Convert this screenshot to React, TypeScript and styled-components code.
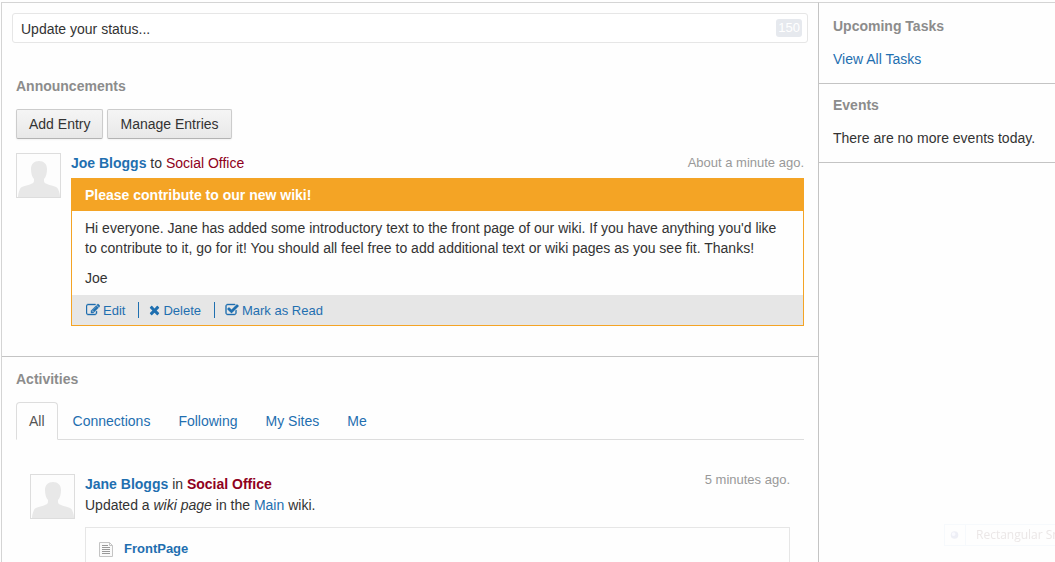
import React from "react";
import styled, { createGlobalStyle } from "styled-components";

const GlobalStyle = createGlobalStyle`
  * { box-sizing: border-box; }
  body {
    margin: 0;
    background: #fefefe;
    color: #333;
    font: 14px/20px "Liberation Sans", Arial, sans-serif;
  }
  p { margin: 0; }
  a { color: #1f6fb0; text-decoration: none; }
`;

const Page = styled.div`
  display: flex;
  min-height: 100vh;
  padding-top: 2px;
  padding-left: 1px;
`;

const Main = styled.main`
  flex: 1;
  min-width: 0;
  border-top: 1px solid #d4d4d4;
  border-left: 1px solid #d4d4d4;
`;

const Sidebar = styled.aside`
  flex: 0 0 237px;
  border-top: 1px solid #d4d4d4;
  border-left: 1px solid #c4c4c4;
`;

const SidePanel = styled.section`
  padding: 13px 14px 14px;
  border-bottom: 1px solid #c4c4c4;
  white-space: nowrap;

  & + & { padding-top: 11px; }
`;

const Heading = styled.h2`
  margin: 0;
  color: #8c8c8c;
  font-size: 14px;
  line-height: 20px;
`;

const SideText = styled.p`
  margin-top: 13px;
`;

const StatusForm = styled.form`
  display: flex;
  align-items: center;
  height: 30px;
  margin: 10px 10px 33px;
  padding: 0 5px 0 8px;
  border: 1px solid #e6e6e6;
  border-radius: 3px;
  background: #fff;
`;

const StatusInput = styled.input`
  flex: 1;
  min-width: 0;
  padding: 2px 0 0;
  border: 0;
  outline: 0;
  background: transparent;
  color: #333;
  font: inherit;

  &::placeholder { color: #333; opacity: 1; }
`;

const Counter = styled.span`
  padding: 0 2px;
  border-radius: 3px;
  background: #e6e9ee;
  color: #fff;
  font-size: 13px;
  line-height: 18px;
`;

const Announcements = styled.section`
  padding: 0 14px 30px;
  border-bottom: 1px solid #c4c4c4;
`;

const ButtonRow = styled.div`
  display: flex;
  gap: 4px;
  margin: 13px 0 14px;
`;

const Button = styled.button`
  height: 30px;
  padding: 0 12px;
  border: 1px solid #ccc;
  border-bottom-color: #b3b3b3;
  border-radius: 2px;
  background: linear-gradient(#f5f5f5, #e8e8e8);
  box-shadow: 0 1px 2px rgba(0, 0, 0, 0.05);
  color: #333;
  font: inherit;
`;

const Post = styled.article`
  display: flex;
  gap: 10px;
`;

const PostBody = styled.div`
  flex: 1;
  min-width: 0;
`;

const PostHeader = styled.header<{ $bottom: number }>`
  display: flex;
  justify-content: space-between;
  padding-bottom: ${(p) => p.$bottom}px;
`;

const SiteLink = styled.a`
  color: #8f0020;
`;

const Time = styled.time<{ $lineHeight: number }>`
  color: #999;
  font-size: 13px;
  line-height: ${(p) => p.$lineHeight}px;
`;

const AvatarFrame = styled.svg`
  flex: none;
  width: 45px;
  height: 45px;
  border: 1px solid #ddd;
  background: #fdfdfd;
`;

const Notice = styled.div`
  border: 1px solid #f4a425;
`;

const NoticeTitle = styled.h3`
  margin: 0;
  padding: 6px 13px;
  background: #f4a425;
  color: #fff;
  font-size: 14px;
  line-height: 20px;
`;

const NoticeText = styled.div`
  display: grid;
  gap: 10px;
  padding: 7px 13px;
`;

const NoticeActions = styled.div`
  display: flex;
  padding: 7px 14px;
  background: #e6e6e6;
`;

const Action = styled.a`
  display: flex;
  align-items: center;
  gap: 3px;
  font-size: 13px;
  line-height: 16px;

  & + & {
    margin-left: 13px;
    padding-left: 10px;
    border-left: 1px solid #1f6fb0;
  }
`;

const ActionLabel = styled.span`
  padding-top: 1px;
  line-height: 15px;
`;

const Glyph = styled.svg`
  width: 14px;
  height: 14px;
  fill: currentColor;
`;

const CrossGlyph = styled(Glyph)`
  width: 11px;
`;

const Activities = styled.section`
  padding: 12px 14px 0;
`;

const Tabs = styled.nav`
  display: flex;
  gap: 2px;
  margin: 13px 0 34px;
  border-bottom: 1px solid #ddd;
`;

const Tab = styled.a<{ $active?: boolean }>`
  margin-bottom: -1px;
  padding: 8px 12px;
  border: 1px solid ${(p) => (p.$active ? "#ddd" : "transparent")};
  border-bottom-color: ${(p) => (p.$active ? "#fefefe" : "transparent")};
  border-radius: 4px 4px 0 0;
  color: ${(p) => (p.$active ? "#555" : "#1f6fb0")};
`;

const Feed = styled.div`
  padding: 0 14px;
`;

const Attachment = styled.div`
  display: flex;
  align-items: center;
  gap: 10px;
  margin-top: 12px;
  padding: 11px 13px 3px;
  border: 1px solid #e6e6e6;
  border-bottom: 0;
  font-size: 13px;
  font-weight: bold;
`;

const PageGlyph = styled.svg`
  width: 15px;
  height: 16px;
`;

const Ghost = styled.div`
  position: fixed;
  right: 0;
  bottom: 16px;
  display: flex;
  width: 111px;
  height: 22px;
  overflow: hidden;
  border: 1px solid #f6f9fc;
  border-right: 0;
  color: #ebe7e7;
  font: 12px/20px "Open Sans", "Noto Sans", sans-serif;
  white-space: nowrap;
`;

const GhostIcon = styled.svg`
  flex: none;
  width: 21px;
  height: 20px;
  margin-right: 10px;
  border-right: 1px solid #f6f9fc;
`;

function Avatar({ name }: { name: string }) {
  return (
    <AvatarFrame viewBox="0 0 43 43" role="img" aria-label={name}>
      <path
        fill="#e8e8e8"
        d="M22 7c5 0 8 3 8 8 0 4-1 8-3 10 0 3 0 4 3 5 5 2 10 2 11 5 1 2 2 5 2 8H1c0-3 1-6 2-8 1-3 6-3 11-5 3-1 3-2 3-5-2-2-3-6-3-10 0-5 3-8 8-8z"
      />
    </AvatarFrame>
  );
}

const editPath =
  "M888 1184l116-116-152-152-116 116v56h96v96h56zm440-720q-16-16-33 1l-350 350q-17 17-1 33t33-1l350-350q17-17 1-33zm80 594v190q0 119-84.5 203.5t-203.5 84.5h-832q-119 0-203.5-84.5t-84.5-203.5v-832q0-119 84.5-203.5t203.5-84.5h832q63 0 117 25 15 7 18 23 3 17-9 29l-49 49q-14 14-32 8-23-6-45-6h-832q-66 0-113 47t-47 113v832q0 66 47 113t113 47h832q66 0 113-47t47-113v-126q0-13 9-22l64-64q15-15 35-7t20 29zm-96-738l288 288-672 672h-288v-288zm444 132l-92 92-288-288 92-92q28-28 68-28t68 28l152 152q28 28 28 68t-28 68z";
const crossPath =
  "M1490 1322q0 40-28 68l-136 136q-28 28-68 28t-68-28l-294-294-294 294q-28 28-68 28t-68-28l-136-136q-28-28-28-68t28-68l294-294-294-294q-28-28-28-68t28-68l136-136q28-28 68-28t68 28l294 294 294-294q28-28 68-28t68 28l136 136q28 28 28 68t-28 68l-294 294 294 294q28 28 28 68z";
const checkPath =
  "M1472 930v318q0 119-84.5 203.5t-203.5 84.5h-832q-119 0-203.5-84.5t-84.5-203.5v-832q0-119 84.5-203.5t203.5-84.5h832q63 0 117 25 15 7 18 23 3 17-9 29l-49 49q-10 10-23 10-3 0-9-2-23-6-45-6h-832q-66 0-113 47t-47 113v832q0 66 47 113t113 47h832q66 0 113-47t47-113v-254q0-13 9-22l64-64q10-10 23-10 6 0 12 3 20 8 20 29zm231-489l-814 814q-24 24-57 24t-57-24l-430-430q-24-24-24-57t24-57l110-110q24-24 57-24t57 24l263 263 647-647q24-24 57-24t57 24l110 110q24 24 24 57t-24 57z";

const tabs = ["All", "Connections", "Following", "My Sites", "Me"];

export default function App() {
  return (
    <>
      <GlobalStyle />
      <Page>
        <Main>
          <StatusForm>
            <StatusInput aria-label="Status" placeholder="Update your status..." />
            <Counter>150</Counter>
          </StatusForm>

          <Announcements>
            <Heading>Announcements</Heading>
            <ButtonRow>
              <Button type="button">Add Entry</Button>
              <Button type="button">Manage Entries</Button>
            </ButtonRow>
            <Post>
              <Avatar name="Joe Bloggs" />
              <PostBody>
                <PostHeader $bottom={5}>
                  <span>
                    <a href="#joe"><b>Joe Bloggs</b></a> to <SiteLink href="#site">Social Office</SiteLink>
                  </span>
                  <Time $lineHeight={20}>About a minute ago.</Time>
                </PostHeader>
                <Notice>
                  <NoticeTitle>Please contribute to our new wiki!</NoticeTitle>
                  <NoticeText>
                    <p>
                      Hi everyone. Jane has added some introductory text to the front page of our wiki. If you
                      have anything you'd like to contribute to it, go for it! You should all feel free to add
                      additional text or wiki pages as you see fit. Thanks!
                    </p>
                    <p>Joe</p>
                  </NoticeText>
                  <NoticeActions>
                    <Action href="#edit">
                      <Glyph viewBox="0 0 1792 1792"><path d={editPath} stroke="currentColor" strokeWidth="50" /></Glyph>
                      <ActionLabel>Edit</ActionLabel>
                    </Action>
                    <Action href="#delete">
                      <CrossGlyph viewBox="192 0 1408 1792"><path d={crossPath} /></CrossGlyph>
                      <ActionLabel>Delete</ActionLabel>
                    </Action>
                    <Action href="#read">
                      <Glyph viewBox="0 0 1792 1792"><path d={checkPath} stroke="currentColor" strokeWidth="50" /></Glyph>
                      <ActionLabel>Mark as Read</ActionLabel>
                    </Action>
                  </NoticeActions>
                </Notice>
              </PostBody>
            </Post>
          </Announcements>

          <Activities>
            <Heading>Activities</Heading>
            <Tabs>
              {tabs.map((tab, i) => (
                <Tab key={tab} href="#activities" $active={i === 0}>{tab}</Tab>
              ))}
            </Tabs>
            <Feed>
              <Post>
                <Avatar name="Jane Bloggs" />
                <PostBody>
                  <PostHeader $bottom={1}>
                    <span>
                      <a href="#jane"><b>Jane Bloggs</b></a> in <SiteLink href="#site"><b>Social Office</b></SiteLink>
                    </span>
                    <Time $lineHeight={12}>5 minutes ago.</Time>
                  </PostHeader>
                  <p>
                    Updated a <i>wiki page</i> in the <a href="#main">Main</a> wiki.
                  </p>
                  <Attachment>
                    <PageGlyph viewBox="0 0 15 16">
                      <path d="M.5 1.500h10l3 3v11h-13z" fill="#fafafa" stroke="#c4c4c4" />
                      <path d="M10.500 1.500v3h3" fill="none" stroke="#c4c4c4" />
                      <path d="M3 4.500h6M3 6.500h8M3 8.500h8M3 10.500h8M3 12.500h8" stroke="#999" />
                    </PageGlyph>
                    <a href="#frontpage">FrontPage</a>
                  </Attachment>
                </PostBody>
              </Post>
            </Feed>
          </Activities>
        </Main>

        <Sidebar>
          <SidePanel>
            <Heading>Upcoming Tasks</Heading>
            <SideText><a href="#tasks">View All Tasks</a></SideText>
          </SidePanel>
          <SidePanel>
            <Heading>Events</Heading>
            <SideText>There are no more events today.</SideText>
          </SidePanel>
        </Sidebar>
      </Page>
      <Ghost aria-hidden="true">
        <GhostIcon viewBox="0 0 21 20">
          <circle cx="10" cy="10" r="4" fill="#eeeff6" />
          <circle cx="9" cy="9" r="2" fill="#fafaff" />
        </GhostIcon>
        Rectangular Sn
      </Ghost>
    </>
  );
}
